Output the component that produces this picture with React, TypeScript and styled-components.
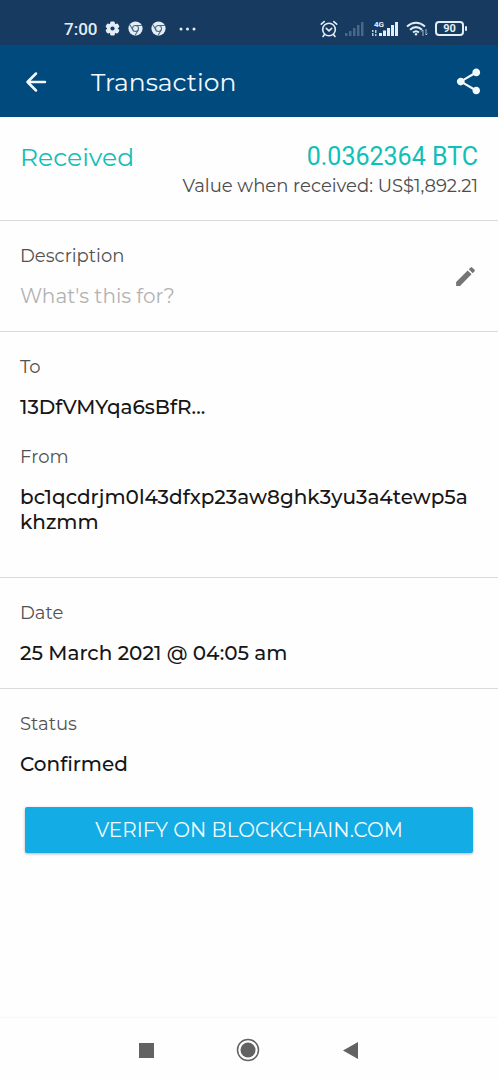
import React from "react";
import styled, { createGlobalStyle } from "styled-components";
import { MdEdit, MdShare } from "react-icons/md";

const GlobalStyle = createGlobalStyle`
  *, *::before, *::after { box-sizing: border-box; }
  body { margin: 0; background: #fefefe; font-family: Montserrat, Inter, "Open Sans", sans-serif; color: #161616; }
  button, input { font: inherit; }
`;

const Screen = styled.div`
  display: flex;
  flex-direction: column;
  min-height: 100vh;
`;

const StatusBar = styled.div`
  display: flex;
  align-items: center;
  justify-content: space-between;
  height: 45px;
  padding: 12px 31px 0 64px;
  background: #173a61;
  color: #e3edf6;
`;

const StatusGroup = styled.div<{ $gap: number }>`
  display: flex;
  align-items: center;
  gap: ${(p) => p.$gap}px;
  svg { display: block; }
`;

const Clock = styled.time`
  font: 500 17px/20px Roboto, sans-serif;
`;

const AppBar = styled.header`
  display: flex;
  align-items: center;
  height: 72px;
  padding: 1px 14px 0 20px;
  background: #004a7d;
  color: #f3f8fc;
`;

const IconButton = styled.button`
  display: flex;
  align-items: center;
  justify-content: center;
  flex: none;
  width: 32px;
  height: 32px;
  padding: 0;
  border: 0;
  background: none;
  color: inherit;
`;

const Title = styled.h1`
  flex: 1;
  margin: 0 0 0 39px;
  font-size: 25px;
  line-height: 32px;
  font-weight: 400;
`;

const Main = styled.main`
  flex: 1;
`;

const Section = styled.section<{ $bottom?: number; $last?: boolean }>`
  padding: 23px 20px ${(p) => p.$bottom ?? 22}px;
  border-bottom: ${(p) => (p.$last ? "0" : "1px solid #dadada")};
`;

const Summary = styled(Section)`
  display: flex;
  justify-content: space-between;
  align-items: flex-start;
`;

const Kind = styled.h2`
  margin: 0;
  padding-top: 1px;
  font-size: 25px;
  line-height: 32px;
  font-weight: 400;
  color: #10c0b8;
`;

const Amounts = styled.div`
  text-align: right;
`;

const Amount = styled.div`
  font: 400 25px/34px Roboto, sans-serif;
  color: #10c0b8;
`;

const FiatValue = styled.div`
  font-size: 18px;
  line-height: 24px;
  color: #4c4c4c;
`;

const EditableSection = styled(Section)`
  display: flex;
  align-items: center;
  padding-right: 17px;
  color: #757575;
`;

const Field = styled.div`
  flex: 1;
  min-width: 0;
  & + & { margin-top: 25px; }
`;

const labelText = `
  display: block;
  margin: 0 0 16px;
  font-size: 18px;
  line-height: 24px;
  font-weight: 400;
  color: #525252;
`;

const Label = styled.h3`${labelText}`;
const InputLabel = styled.label`${labelText}`;

const Value = styled.p`
  margin: 0;
  font-size: 20px;
  line-height: 25px;
  font-weight: 500;
  overflow-wrap: anywhere;
`;

const NoteInput = styled.input`
  display: block;
  width: 100%;
  height: 25px;
  padding: 0;
  border: 0;
  outline: 0;
  background: none;
  font-size: 20px;
  line-height: 25px;
  &::placeholder { color: #b2b2b2; opacity: 1; }
`;

const VerifyButton = styled.button`
  display: block;
  width: calc(100% - 10px);
  height: 46px;
  margin: 30px 5px 0;
  border: 0;
  border-radius: 2px;
  background: #13ace5;
  box-shadow: 0 1px 3px rgba(0, 0, 0, 0.3);
  color: #f2fbff;
  font-size: 20px;
  line-height: 24px;
`;

const NavBar = styled.nav`
  display: flex;
  align-items: center;
  justify-content: center;
  gap: 70px;
  height: 63px;
  padding: 2px 2px 0 0;
  border-top: 1px solid #f7f7f7;
  color: #626262;
`;

const GearIcon = () => (
  <svg width="15" height="15" viewBox="0 0 16 16" aria-hidden="true">
    <g fill="currentColor">
      {[0, 60, 120].map((a) => (
        <rect key={a} x="5.5" y="0.5" width="5" height="15" rx="1.5" transform={`rotate(${a} 8 8)`} />
      ))}
      <circle cx="8" cy="8" r="5.8" />
    </g>
    <circle cx="8" cy="8" r="2.2" fill="#173a61" />
  </svg>
);

const ChromeIcon = () => (
  <svg width="15" height="15" viewBox="0 0 16 16" aria-hidden="true">
    <circle cx="8" cy="8" r="7.6" fill="currentColor" />
    <g fill="none" stroke="#4b6685" strokeWidth="1.1">
      <circle cx="8" cy="8" r="3.2" />
      <path d="M8 4.8H14.6M5.2 9.6L2 4M10.8 9.6L7.5 15.4" />
    </g>
  </svg>
);

const AlarmIcon = () => (
  <svg width="18" height="18" viewBox="0 0 18 18" fill="none" stroke="currentColor" strokeWidth="1.6" strokeLinecap="round" aria-hidden="true">
    <circle cx="9" cy="9.5" r="6.3" />
    <path d="M1.3 4.2L4.2 1.6M16.7 4.2L13.8 1.6M6.3 8.3L9 10.8L11.7 8.3M4.5 14.5L3 16.5M13.5 14.5L15 16.5" />
  </svg>
);

const EmptySignal = () => (
  <svg width="19" height="14" viewBox="0 0 19 14" fill="currentColor" opacity="0.25" aria-hidden="true">
    <path d="M0 11h2.5v3H0zM4 9h2.5v5H4zM8 6h2.5v8H8zM12 3h2.5v11H12zM16 0h2.5v14H16z" />
  </svg>
);

const SignalText = styled.text`
  font: 700 8px Roboto, sans-serif;
`;

const Signal = () => (
  <svg width="28" height="18" viewBox="0 0 28 18" fill="currentColor" aria-hidden="true">
    <SignalText x="3" y="7">4G</SignalText>
    <path d="M8 13h3v3H8zM12 10.500h3v5.500H12zM16 8h3v8H16zM20 5h3v11H20zM24 2h3v14H24z" />
    <path d="M1 10h1.500v2H1zM1 13h1.500v3H1zM4 10h1.500v3H4zM4 14h1.500v2H4z" opacity="0.8" />
  </svg>
);

const Wifi = () => (
  <svg width="22" height="16" viewBox="0 0 22 16" fill="none" stroke="currentColor" strokeWidth="2" aria-hidden="true">
    <path d="M1 5.500Q10 -2 19 5.500M4 8.700Q10 3.500 16 8.700M7 11.500Q10 9 13 11.500" />
    <circle cx="10" cy="13.200" r="1.200" fill="currentColor" stroke="none" />
    <path d="M17 15V9M15.500 10.500L17 9M20 8v6M20 14l1.500-1.500" strokeWidth="1" opacity="0.7" />
  </svg>
);

const BatteryBody = styled.span`
  display: flex;
  align-items: center;
  justify-content: center;
  width: 29px;
  height: 15px;
  border: 2px solid currentColor;
  border-radius: 4px;
  font: 700 11px/11px Roboto, sans-serif;
`;

const Battery = styled.span`
  display: flex;
  align-items: center;
  gap: 1px;
  &::after { content: ""; width: 2px; height: 5px; background: currentColor; border-radius: 1px; }
`;

export default function App() {
  return (
    <Screen>
      <GlobalStyle />
      <StatusBar>
        <StatusGroup $gap={8}>
          <Clock>7:00</Clock>
          <GearIcon />
          <ChromeIcon />
          <ChromeIcon />
          <svg width="28" height="4" viewBox="0 0 28 4" fill="currentColor" aria-hidden="true">
            <circle cx="7" cy="2" r="1.500" />
            <circle cx="13.500" cy="2" r="1.500" />
            <circle cx="20" cy="2" r="1.500" />
          </svg>
        </StatusGroup>
        <StatusGroup $gap={7}>
          <AlarmIcon />
          <EmptySignal />
          <Signal />
          <Wifi />
          <Battery><BatteryBody>90</BatteryBody></Battery>
        </StatusGroup>
      </StatusBar>
      <AppBar>
        <IconButton aria-label="Back">
          <svg width="22" height="22" viewBox="0 0 22 22" fill="none" stroke="currentColor" strokeWidth="2.500" strokeLinecap="round" strokeLinejoin="round">
            <path d="M11 2.500L2.500 11L11 19.500M2.500 11H20" />
          </svg>
        </IconButton>
        <Title>Transaction</Title>
        <IconButton aria-label="Share"><MdShare size={31} /></IconButton>
      </AppBar>
      <Main>
        <Summary>
          <Kind>Received</Kind>
          <Amounts>
            <Amount>0.0362364 BTC</Amount>
            <FiatValue>Value when received: US$1,892.21</FiatValue>
          </Amounts>
        </Summary>
        <EditableSection>
          <Field>
            <InputLabel htmlFor="note">Description</InputLabel>
            <NoteInput id="note" placeholder="What's this for?" />
          </Field>
          <IconButton aria-label="Edit description"><MdEdit size={25} /></IconButton>
        </EditableSection>
        <Section $bottom={42}>
          <Field>
            <Label>To</Label>
            <Value>13DfVMYqa6sBfR...</Value>
          </Field>
          <Field>
            <Label>From</Label>
            <Value>bc1qcdrjm0l43dfxp23aw8ghk3yu3a4tewp5akhzmm</Value>
          </Field>
        </Section>
        <Section>
          <Label>Date</Label>
          <Value>25 March 2021 @ 04:05 am</Value>
        </Section>
        <Section $last>
          <Label>Status</Label>
          <Value>Confirmed</Value>
          <VerifyButton>VERIFY ON BLOCKCHAIN.COM</VerifyButton>
        </Section>
      </Main>
      <NavBar>
        <IconButton aria-label="Recent apps">
          <svg width="15" height="15" viewBox="0 0 15 15"><rect width="15" height="15" fill="currentColor" /></svg>
        </IconButton>
        <IconButton aria-label="Home">
          <svg width="24" height="24" viewBox="0 0 24 24">
            <circle cx="12" cy="12" r="10.500" fill="none" stroke="currentColor" strokeWidth="1.500" />
            <circle cx="12" cy="12" r="7.500" fill="currentColor" />
          </svg>
        </IconButton>
        <IconButton aria-label="Go back">
          <svg width="15" height="17" viewBox="0 0 15 17"><path d="M15 0V17L0 8.500Z" fill="currentColor" /></svg>
        </IconButton>
      </NavBar>
    </Screen>
  );
}
